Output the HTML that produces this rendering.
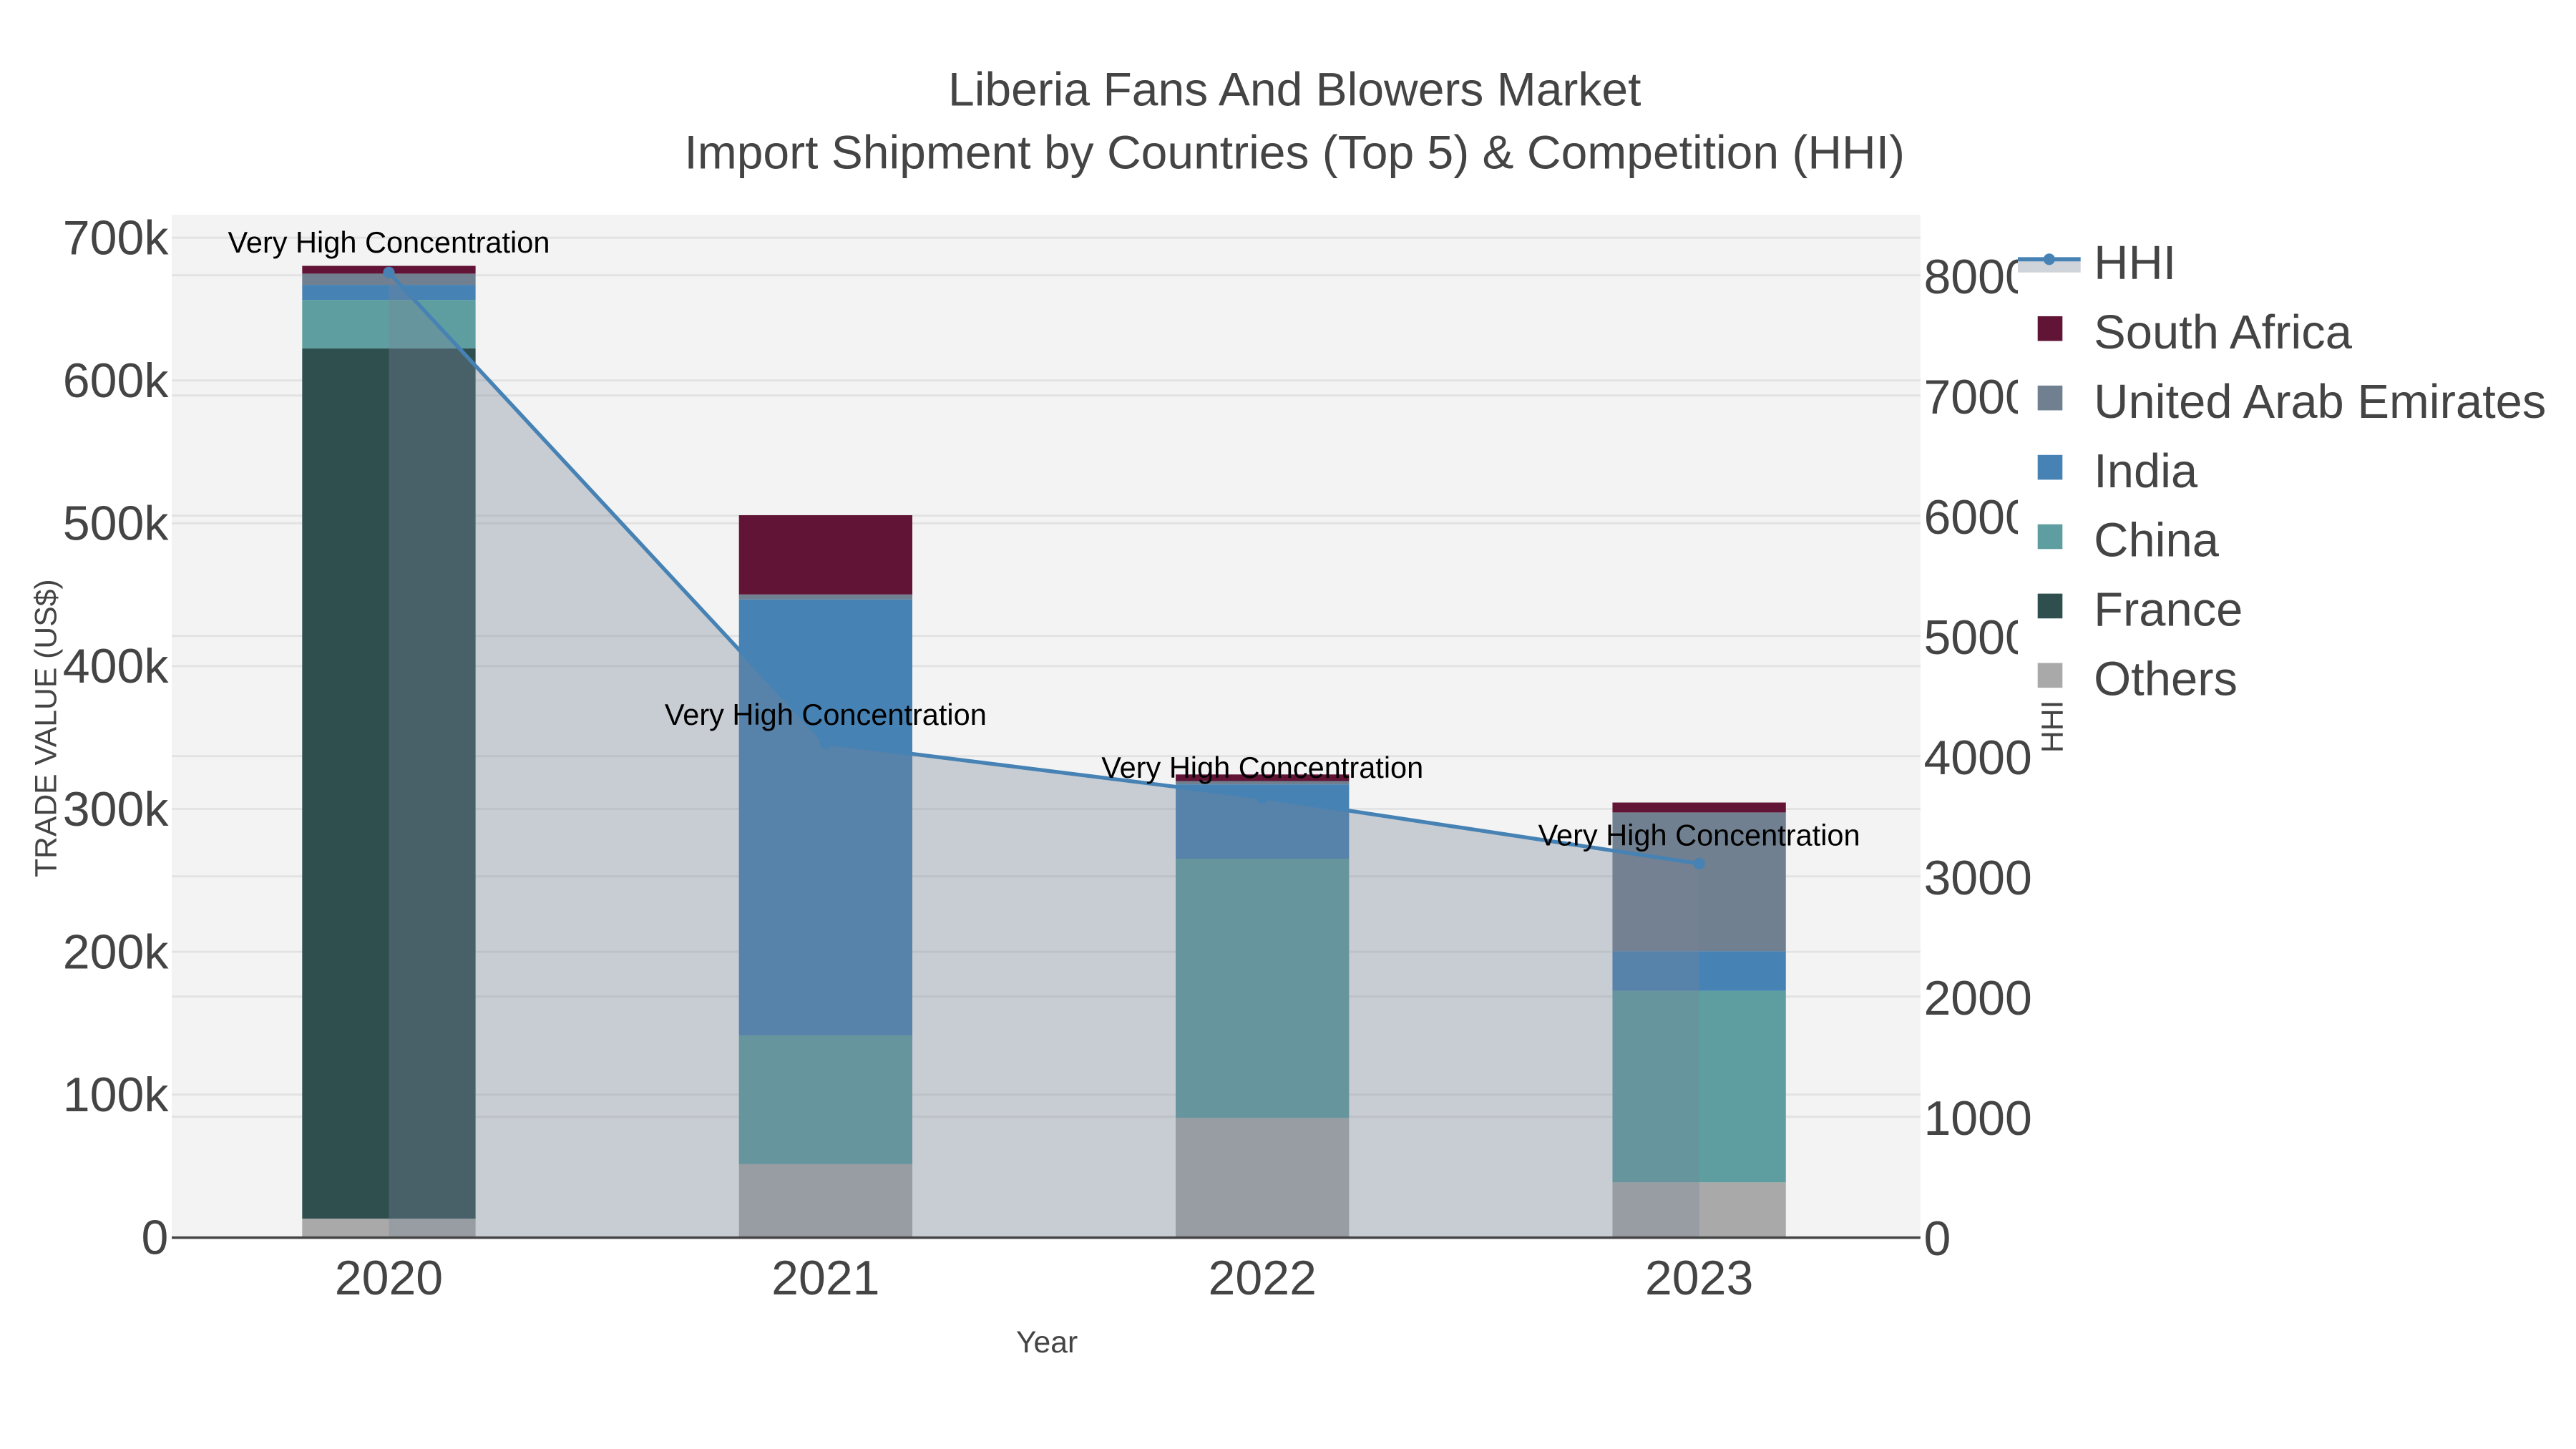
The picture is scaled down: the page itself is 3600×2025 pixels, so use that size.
<!DOCTYPE html>
<html><head><meta charset="utf-8"><style>html,body{margin:0;padding:0;background:#fff}svg{display:block}</style></head>
<body>
<svg xmlns="http://www.w3.org/2000/svg" width="3600" height="2025" viewBox="0 0 1560 877.5" font-family="Liberation Sans, sans-serif">
<rect width="1560" height="877.5" fill="#fff"/>
<rect x="104" y="130" width="1059" height="619" fill="#f3f3f3"/>
<g stroke="#e2e2e2" stroke-width="1.2">
<line x1="104" x2="1163" y1="143.9" y2="143.9"/><line x1="104" x2="1163" y1="230.4" y2="230.4"/><line x1="104" x2="1163" y1="316.9" y2="316.9"/><line x1="104" x2="1163" y1="403.4" y2="403.4"/><line x1="104" x2="1163" y1="489.9" y2="489.9"/><line x1="104" x2="1163" y1="576.4" y2="576.4"/><line x1="104" x2="1163" y1="662.9" y2="662.9"/>
<line x1="104" x2="1163" y1="166.7" y2="166.7"/><line x1="104" x2="1163" y1="239.5" y2="239.5"/><line x1="104" x2="1163" y1="312.3" y2="312.3"/><line x1="104" x2="1163" y1="385.1" y2="385.1"/><line x1="104" x2="1163" y1="457.9" y2="457.9"/><line x1="104" x2="1163" y1="530.7" y2="530.7"/><line x1="104" x2="1163" y1="603.5" y2="603.5"/><line x1="104" x2="1163" y1="676.3" y2="676.3"/>
</g>
<g>
<rect x="183" y="738" width="105" height="11" fill="#a9a9a9"/>
<rect x="183" y="211" width="105" height="527" fill="#2f4f4f"/>
<rect x="183" y="181.6" width="105" height="29.4" fill="#5f9ea0"/>
<rect x="183" y="172.5" width="105" height="9.1" fill="#4682b4"/>
<rect x="183" y="165.7" width="105" height="6.8" fill="#708090"/>
<rect x="183" y="161" width="105" height="4.7" fill="#611435"/>

<rect x="447.5" y="705" width="105" height="44" fill="#a9a9a9"/>
<rect x="447.5" y="627" width="105" height="78" fill="#5f9ea0"/>
<rect x="447.5" y="363" width="105" height="264" fill="#4682b4"/>
<rect x="447.5" y="360" width="105" height="3" fill="#708090"/>
<rect x="447.5" y="312" width="105" height="48" fill="#611435"/>

<rect x="712" y="677" width="105" height="72" fill="#a9a9a9"/>
<rect x="712" y="520" width="105" height="157" fill="#5f9ea0"/>
<rect x="712" y="475" width="105" height="45" fill="#4682b4"/>
<rect x="712" y="473" width="105" height="2" fill="#708090"/>
<rect x="712" y="469" width="105" height="4" fill="#611435"/>

<rect x="976.5" y="716" width="105" height="33" fill="#a9a9a9"/>
<rect x="976.5" y="600" width="105" height="116" fill="#5f9ea0"/>
<rect x="976.5" y="576" width="105" height="24" fill="#4682b4"/>
<rect x="976.5" y="492" width="105" height="84" fill="#708090"/>
<rect x="976.5" y="486" width="105" height="6" fill="#611435"/>
</g>
<polygon points="235.5,165 500,450 764.5,483 1029,523 1029,749 235.5,749" fill="rgb(120,132,152)" fill-opacity="0.35"/>
<polyline points="235.5,165 500,450 764.5,483 1029,523" fill="none" stroke="#4682b4" stroke-width="2.3"/>
<g fill="#4682b4"><circle cx="235.5" cy="165" r="3.5"/><circle cx="500" cy="450" r="3.5"/><circle cx="764.5" cy="483" r="3.5"/><circle cx="1029" cy="523" r="3.5"/></g>
<line x1="104" x2="1163" y1="749.5" y2="749.5" stroke="#444" stroke-width="1.5"/>
<g font-size="18" fill="#000" text-anchor="middle">
<text x="235.5" y="153">Very High Concentration</text>
<text x="500" y="439">Very High Concentration</text>
<text x="764.5" y="471">Very High Concentration</text>
<text x="1029" y="512">Very High Concentration</text>
</g>
<g fill="#444" text-anchor="middle" font-size="28.6">
<text x="784" y="64">Liberia Fans And Blowers Market</text>
<text x="784" y="102">Import Shipment by Countries (Top 5) &amp; Competition (HHI)</text>
</g>
<g fill="#444" font-size="29.5" text-anchor="end">
<text x="102" y="154">700k</text><text x="102" y="240.5">600k</text><text x="102" y="327">500k</text><text x="102" y="413.5">400k</text><text x="102" y="500">300k</text><text x="102" y="586.5">200k</text><text x="102" y="673">100k</text><text x="102" y="759.5">0</text>
</g>
<g fill="#444" font-size="29.5" text-anchor="middle">
<text x="235.5" y="784">2020</text><text x="500" y="784">2021</text><text x="764.5" y="784">2022</text><text x="1029" y="784">2023</text>
</g>
<text x="634" y="819" font-size="18.5" fill="#444" text-anchor="middle">Year</text>
<text transform="translate(34,441) rotate(-90)" font-size="18.5" fill="#444" text-anchor="middle">TRADE VALUE (US$)</text>
<g fill="#444" font-size="29.5">
<text x="1165" y="177.7">8000</text><text x="1165" y="250.5">7000</text><text x="1165" y="323.3">6000</text><text x="1165" y="396.1">5000</text><text x="1165" y="468.9">4000</text><text x="1165" y="541.7">3000</text><text x="1165" y="614.5">2000</text><text x="1165" y="687.3">1000</text><text x="1165" y="760">0</text>
</g>
<rect x="1222" y="138" width="338" height="300" fill="#fff"/>
<text transform="translate(1249,440) rotate(-90)" font-size="18.5" fill="#444" text-anchor="middle">HHI</text>
<rect x="1222" y="158" width="38" height="7" fill="#cfd3da"/>
<line x1="1222" x2="1260" y1="157" y2="157" stroke="#4682b4" stroke-width="2.5"/>
<circle cx="1241" cy="157" r="3.5" fill="#4682b4"/>
<rect x="1234" y="191.5" width="15" height="15" fill="#611435"/>
<rect x="1234" y="233.5" width="15" height="15" fill="#708090"/>
<rect x="1234" y="275.5" width="15" height="15" fill="#4682b4"/>
<rect x="1234" y="317.5" width="15" height="15" fill="#5f9ea0"/>
<rect x="1234" y="359.5" width="15" height="15" fill="#2f4f4f"/>
<rect x="1234" y="401.5" width="15" height="15" fill="#a9a9a9"/>
<g fill="#444" font-size="29">
<text x="1268" y="169">HHI</text>
<text x="1268" y="211">South Africa</text>
<text x="1268" y="253">United Arab Emirates</text>
<text x="1268" y="295">India</text>
<text x="1268" y="337">China</text>
<text x="1268" y="379">France</text>
<text x="1268" y="421">Others</text>
</g>
</svg>
</body></html>
